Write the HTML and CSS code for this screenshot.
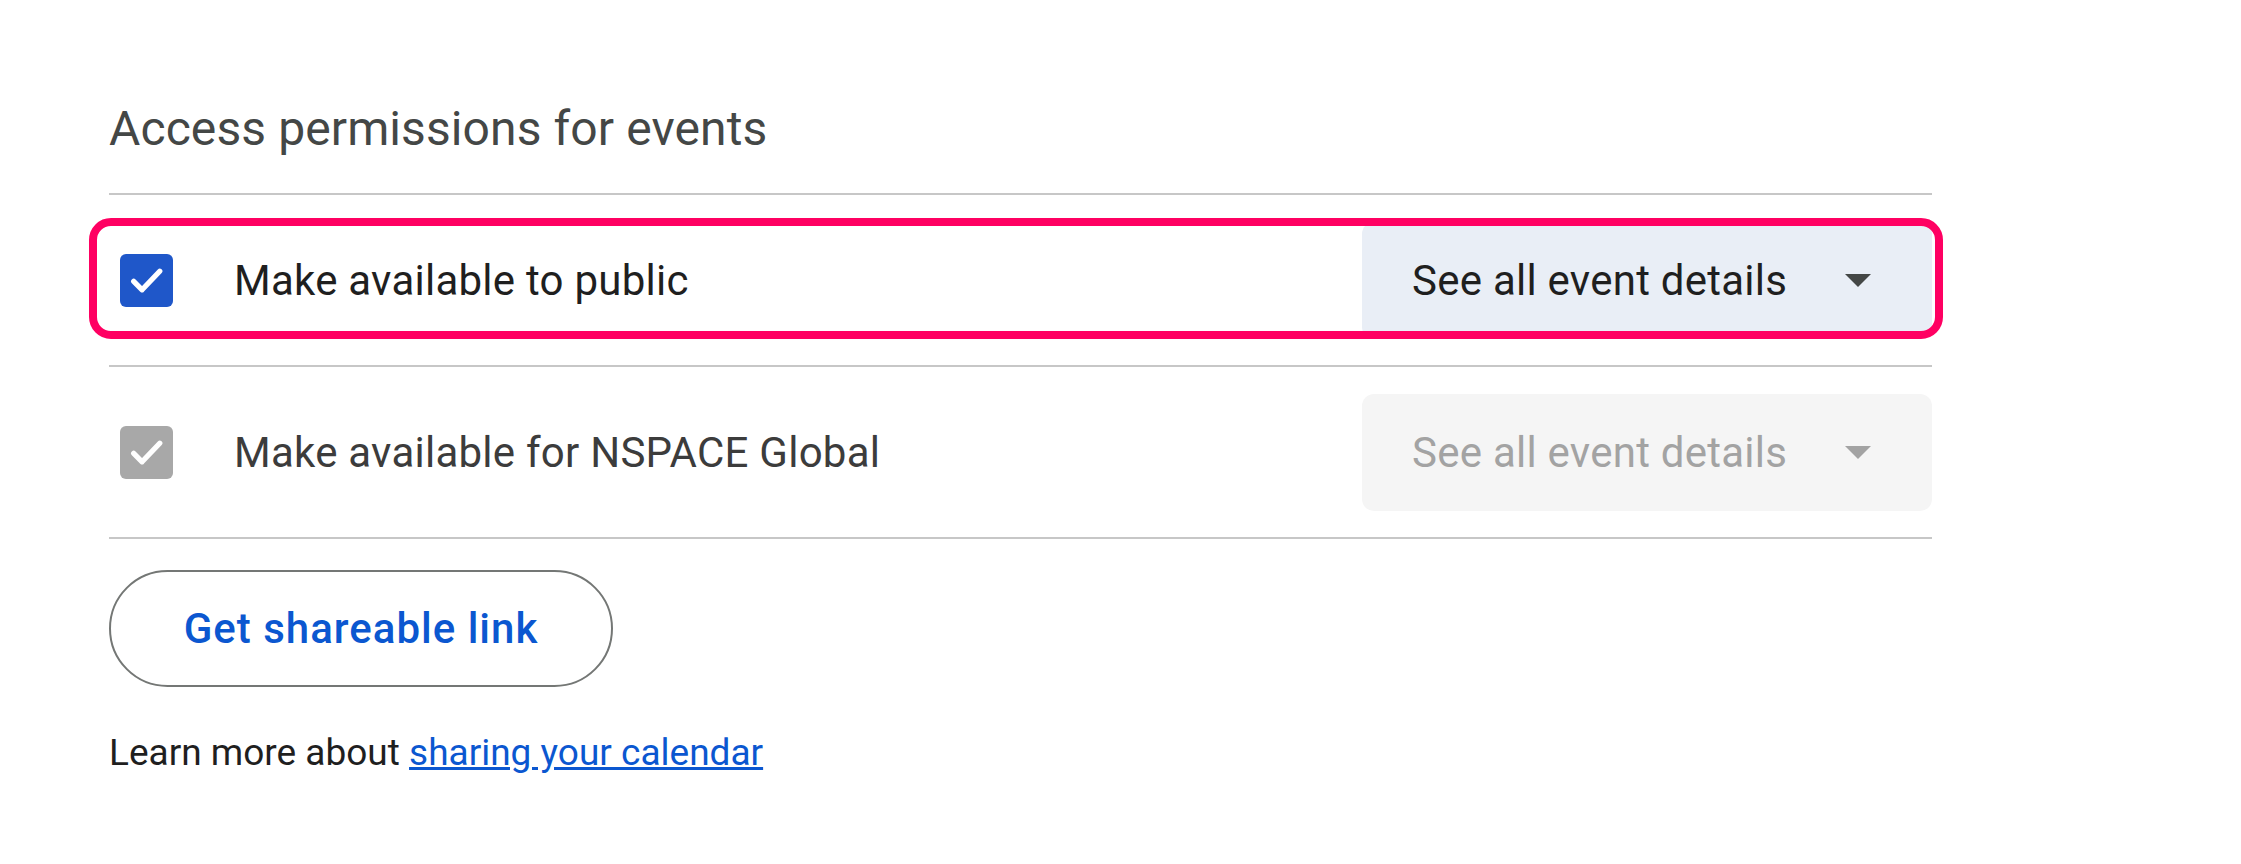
FILE: index.html
```html
<!DOCTYPE html>
<html lang="en">
<head>
<meta charset="utf-8">
<title>Access permissions for events</title>
<link rel="stylesheet" href="styles.css">
</head>
<body>
<main class="section">
  <h2 class="heading">Access permissions for events</h2>
  <div class="list">
    <div class="row row-highlight">
      <span class="checkbox checked">
        <svg viewBox="0 0 24 24" width="53" height="53"><path d="M6.2 12.4l3.8 3.8 8-8.4" fill="none" stroke="#fff" stroke-width="2.4" stroke-linecap="round" stroke-linejoin="round"/></svg>
      </span>
      <span class="label">Make available to public</span>
      <div class="select">
        <span class="select-text">See all event details</span>
        <span class="caret"></span>
      </div>
      <span class="highlight"></span>
    </div>
    <div class="row">
      <span class="checkbox disabled">
        <svg viewBox="0 0 24 24" width="53" height="53"><path d="M6.2 12.4l3.8 3.8 8-8.4" fill="none" stroke="#fff" stroke-width="2.4" stroke-linecap="round" stroke-linejoin="round"/></svg>
      </span>
      <span class="label label-muted">Make available for NSPACE Global</span>
      <div class="select select-disabled">
        <span class="select-text">See all event details</span>
        <span class="caret"></span>
      </div>
    </div>
  </div>
  <button class="pill">Get shareable link</button>
  <p class="learn">Learn more about <a href="#" class="link">sharing your calendar</a></p>
</main>
</body>
</html>
```
FILE: styles.css
```css
* { box-sizing: border-box; }
html, body { margin: 0; padding: 0; background: #fff; }
body { font-family: Roboto, "Noto Sans", Arial, sans-serif; }

.section {
  width: 1823px;
  margin-left: 109px;
  padding-top: 98px;
}

.heading {
  margin: 0;
  font-weight: 400;
  font-size: 48px;
  line-height: 62px;
  letter-spacing: 0.1px;
  color: #444746;
  padding-bottom: 33px;
  border-bottom: 2px solid #c7c7c7;
}

.list { display: flex; flex-direction: column; }

.row {
  position: relative;
  display: flex;
  align-items: center;
  height: 172px;
  border-bottom: 2px solid #c7c7c7;
}

.checkbox {
  width: 53px;
  height: 53px;
  border-radius: 6px;
  margin-left: 11px;
  display: flex;
  align-items: center;
  justify-content: center;
  flex: none;
}
.checkbox svg { display: block; }
.checked { background: #1f57c9; }
.disabled { background: #a8a8a8; }

.label {
  margin-left: 61px;
  font-size: 42px;
  letter-spacing: 0.25px;
  color: #1f1f1f;
  flex: 1;
}
.label-muted { color: #3c3c3c; }

.select {
  width: 570px;
  height: 117px;
  border-radius: 12px;
  background: #e9eef6;
  display: flex;
  align-items: center;
  padding-left: 50px;
  color: #1f1f1f;
  font-size: 42px;
  letter-spacing: 0.25px;
  flex: none;
}
.select-text { flex: 1; }
.caret {
  width: 0; height: 0;
  border-left: 13px solid transparent;
  border-right: 13px solid transparent;
  border-top: 13px solid #444746;
  margin-right: 61px;
}
.select-disabled { background: #f5f5f5; color: #a3a3a3; }
.select-disabled .caret { border-top-color: #a3a3a3; }

.highlight {
  position: absolute;
  top: 23px;
  bottom: 26px;
  left: -20px;
  right: -11px;
  border: 8px solid #ff0062;
  border-radius: 22px;
  pointer-events: none;
}

.pill {
  margin-top: 31px;
  width: 504px;
  height: 117px;
  border: 2px solid #747775;
  border-radius: 60px;
  background: #fff;
  color: #0b57d0;
  font-family: Roboto, "Noto Sans", Arial, sans-serif;
  font-weight: 500;
  font-size: 42px;
  letter-spacing: 1px;
  display: block;
}

.learn {
  margin: 44px 0 0;
  font-size: 37px;
  line-height: 44px;
  color: #1f1f1f;
}
.link { color: #0b57d0; text-decoration: underline; }
```
